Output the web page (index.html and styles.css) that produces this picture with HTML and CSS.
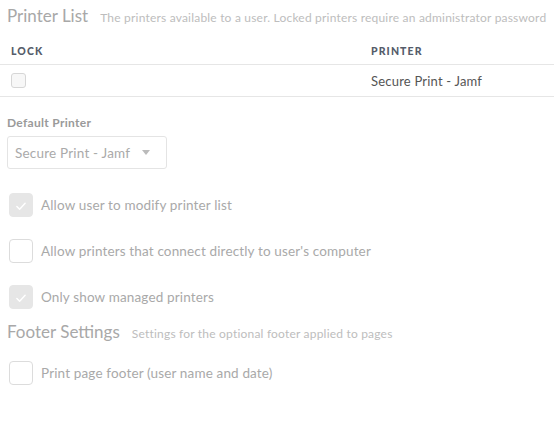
FILE: index.html
```html
<!DOCTYPE html>
<html>
<head>
<meta charset="utf-8">
<link rel="stylesheet" href="styles.css">
</head>
<body>
<div class="page">
  <div class="section-head">
    <span class="section-title">Printer List</span>
    <span class="section-sub">The printers available to a user. Locked printers require an administrator password</span>
  </div>
  <div class="table">
    <div class="row head">
      <div class="col-lock">LOCK</div>
      <div class="col-printer">PRINTER</div>
    </div>
    <div class="row body">
      <div class="col-lock"><span class="small-box"></span></div>
      <div class="col-printer">Secure Print - Jamf</div>
    </div>
  </div>

  <div class="field">
    <div class="field-label">Default Printer</div>
    <div class="select">
      <span class="select-value">Secure Print - Jamf</span>
      <span class="caret"></span>
    </div>
  </div>

  <div class="checks">
    <div class="check">
      <span class="box checked"><svg viewBox="0 0 24 24" width="24" height="24"><path d="M7.5 12.5 L10.5 15.5 L16.5 9" fill="none" stroke="#fff" stroke-width="1.6" stroke-linecap="round" stroke-linejoin="round"/></svg></span>
      <span class="check-label">Allow user to modify printer list</span>
    </div>
    <div class="check">
      <span class="box"></span>
      <span class="check-label">Allow printers that connect directly to user's computer</span>
    </div>
    <div class="check">
      <span class="box checked"><svg viewBox="0 0 24 24" width="24" height="24"><path d="M7.5 12.5 L10.5 15.5 L16.5 9" fill="none" stroke="#fff" stroke-width="1.6" stroke-linecap="round" stroke-linejoin="round"/></svg></span>
      <span class="check-label">Only show managed printers</span>
    </div>
  </div>

  <div class="section-head footer-head">
    <span class="section-title">Footer Settings</span>
    <span class="section-sub">Settings for the optional footer applied to pages</span>
  </div>
  <div class="check single">
    <span class="box"></span>
    <span class="check-label">Print page footer (user name and date)</span>
  </div>
</div>
</body>
</html>
```

FILE: styles.css
```css
html, body {
  margin: 0;
  padding: 0;
  background: #fff;
}
.page {
  width: 554px;
  font-family: "Lato", "Liberation Sans", sans-serif;
  color: #aaa;
}
.section-head {
  display: flex;
  align-items: baseline;
  padding: 5px 0 0 7px;
  height: 20px;
}
.section-title {
  font-size: 17px;
  color: #a8a8a8;
  margin-right: 12px;
}
.section-sub {
  font-size: 12px;
  letter-spacing: 0.2px;
  color: #bdbdbd;
}
.table {
  margin-top: 13px;
}
.row {
  display: flex;
  align-items: center;
  border-bottom: 1px solid #e6e6e6;
}
.row.head {
  height: 26px;
  font-size: 10.5px;
  font-weight: 900;
  letter-spacing: 1.1px;
  color: #555c6a;
}
.row.body {
  height: 31px;
  font-size: 13px;
  letter-spacing: 0.2px;
  color: #555;
}
.col-lock {
  flex: 0 0 auto;
  box-sizing: border-box;
  width: 371px;
  padding-left: 11px;
  display: flex;
  align-items: center;
}
.col-printer {
  flex: 1 1 auto;
}
.small-box {
  width: 13px;
  height: 13px;
  border: 1px solid #d6d6d6;
  border-radius: 3px;
  background: #f7f7f7;
}
.field {
  padding: 18px 0 0 7px;
}
.field-label {
  font-size: 12px;
  letter-spacing: 0.3px;
  font-weight: 700;
  color: #9a9a9a;
  height: 14px;
}
.select {
  margin-top: 7px;
  box-sizing: border-box;
  width: 160px;
  height: 33px;
  border: 1px solid #e4e4e4;
  border-radius: 3px;
  display: flex;
  align-items: center;
  padding-left: 7px;
}
.select-value {
  font-size: 13.5px;
  letter-spacing: 0.2px;
  color: #aaa;
}
.caret {
  margin-left: 12px;
  width: 0;
  height: 0;
  border-left: 4px solid transparent;
  border-right: 4px solid transparent;
  border-top: 5px solid #bbb;
}
.checks {
  padding-top: 24px;
  display: flex;
  flex-direction: column;
  gap: 22px;
}
.check {
  display: flex;
  align-items: center;
  padding-left: 9px;
  height: 24px;
}
.box {
  width: 24px;
  height: 24px;
  box-sizing: border-box;
  border: 1px solid #dcdcdc;
  border-radius: 4px;
  background: #fff;
  margin-right: 8px;
  display: flex;
  flex-shrink: 0;
}
.box.checked {
  background: #e6e6e6;
  border-color: #e6e6e6;
}
.check-label {
  font-size: 13.5px;
  letter-spacing: 0.15px;
  color: #a9a9a9;
}
.footer-head {
  padding-top: 12px;
}
.check.single {
  margin-top: 20px;
}
```
